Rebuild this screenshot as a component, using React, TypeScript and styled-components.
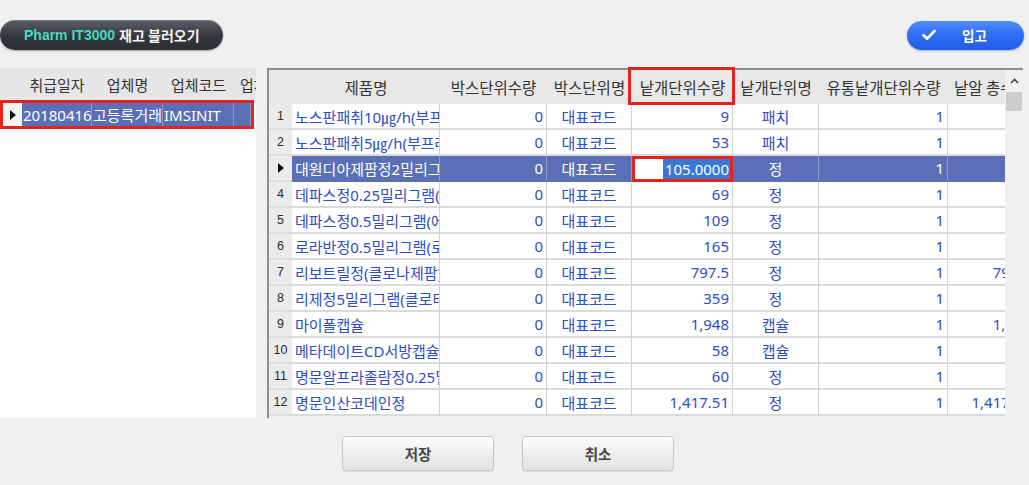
import React from 'react';
import styled, { createGlobalStyle } from 'styled-components';

const GlobalStyle = createGlobalStyle`
  html, body { margin: 0; padding: 0; background: #f0f0f0; }
  body { font-family: "Noto Sans", "Noto Sans CJK KR", sans-serif; }
  * { box-sizing: border-box; }
`;

const Page = styled.div`
  width: 1029px;
  height: 485px;
  display: flex;
  flex-direction: column;
  background: #f0f0f0;
  overflow: hidden;
`;

const TopBar = styled.div`
  height: 68px;
  flex-shrink: 0;
  display: flex;
  align-items: center;
  justify-content: space-between;
  padding: 2px 5px 0 0;
`;

const TitlePill = styled.div`
  width: 223px;
  height: 30px;
  border-radius: 15px;
  background: linear-gradient(#5a5e66, #34373d 55%, #2a2d32);
  box-shadow: inset 0 1px 0 rgba(255, 255, 255, 0.18), 0 1px 2px rgba(0, 0, 0, 0.35);
  display: flex;
  align-items: center;
  gap: 4px;
  padding-left: 24px;
  font-weight: 700;
`;

const Brand = styled.span`
  color: #46d8c4;
  font-family: "Liberation Sans", "Noto Sans", sans-serif;
  font-size: 14px;
`;

const TitleKo = styled.span`
  color: #f3f3f3;
  font-family: "Noto Sans CJK KR", sans-serif;
  font-size: 14px;
`;

const InButton = styled.button`
  width: 117px;
  height: 29px;
  border: none;
  border-radius: 15px;
  background: linear-gradient(#4f8dff, #2f6cf6 50%, #1f5ce9);
  box-shadow: 0 1px 2px rgba(0, 40, 140, 0.3);
  color: #ffffff;
  display: flex;
  align-items: center;
  gap: 26px;
  padding: 0 0 0 15px;
  font-family: "Noto Sans CJK KR", sans-serif;
  font-size: 13.5px;
  font-weight: 700;
`;

const Main = styled.div`
  height: 350px;
  flex-shrink: 0;
  display: flex;
  gap: 11px;
  padding-right: 6px;
`;

const LeftPanel = styled.div`
  width: 256px;
  flex-shrink: 0;
  background: #ffffff;
  display: flex;
  flex-direction: column;
  overflow: hidden;
`;

const LeftHeader = styled.div`
  height: 32px;
  flex-shrink: 0;
  background: #e6e6e6;
  display: grid;
  grid-template-columns: 22px 70px 71px 71px 80px;
  align-items: center;
  font-family: "Noto Sans CJK KR", sans-serif;
  font-size: 15px;
  color: #333333;
  white-space: nowrap;
`;

const LeftHeadCell = styled.div<{ $start?: boolean }>`
  text-align: ${(p) => (p.$start ? 'left' : 'center')};
  padding-left: ${(p) => (p.$start ? '6px' : '0')};
  overflow: hidden;
`;

const LeftRow = styled.div`
  width: 254px;
  height: 29px;
  border: 3px solid #e3231d;
  display: grid;
  grid-template-columns: 19px 70px 71px 71px 17px;
  font-size: 15px;
  color: #ffffff;
  white-space: nowrap;
`;

const Indicator = styled.div`
  background: #f4f4f4;
  display: flex;
  align-items: center;
  justify-content: center;
`;

const Arrow = styled.span`
  width: 0;
  height: 0;
  border-left: 6px solid #111111;
  border-top: 5px solid transparent;
  border-bottom: 5px solid transparent;
`;

const LeftCell = styled.div`
  background: #5a6fb5;
  border-right: 1px solid #8b9bcf;
  display: flex;
  align-items: center;
  padding-left: 1px;
  overflow: hidden;
`;

const GridPanel = styled.div`
  position: relative;
  flex: 1;
  min-width: 0;
  display: flex;
  border-top: 2px solid #8e8e8e;
  border-left: 2px solid #8e8e8e;
  background: #eeeeee;
`;

const Viewport = styled.div`
  flex: 1;
  min-width: 0;
  overflow: hidden;
  display: flex;
  flex-direction: column;
`;

const COLS = '23px 148px 107px 85px 101px 86px 129px 87px';

const HeaderRow = styled.div`
  height: 34px;
  flex-shrink: 0;
  width: max-content;
  display: grid;
  grid-template-columns: ${COLS};
  align-items: center;
  background: #e8e8e8;
  font-family: "Noto Sans CJK KR", sans-serif;
  font-size: 15.5px;
  color: #333333;
  white-space: nowrap;
`;

const HeadCell = styled.div`
  text-align: center;
  overflow: hidden;
`;

const DataRow = styled.div`
  height: 26px;
  flex-shrink: 0;
  width: max-content;
  display: grid;
  grid-template-columns: ${COLS};
  font-size: 15px;
  white-space: nowrap;
`;

const RowHead = styled.div`
  background: #ebebeb;
  border-bottom: 2px solid #dedede;
  display: flex;
  align-items: center;
  justify-content: center;
  font-family: "Liberation Sans", sans-serif;
  font-size: 12.5px;
  color: #2a2a2a;
`;

const Cell = styled.div<{ $align: 'left' | 'right' | 'center'; $selected?: boolean }>`
  background: ${(p) => (p.$selected ? '#5a6fb5' : '#ffffff')};
  color: ${(p) => (p.$selected ? '#ffffff' : '#2c4dc6')};
  border-right: 1px solid ${(p) => (p.$selected ? '#8c9bcc' : '#d2d2d2')};
  border-bottom: 2px solid ${(p) => (p.$selected ? '#5a6fb5' : '#dadada')};
  display: flex;
  align-items: center;
  justify-content: ${(p) => (p.$align === 'left' ? 'flex-start' : p.$align === 'right' ? 'flex-end' : 'center')};
  padding: 0 3px;
  overflow: hidden;
`;

const EditCell = styled.div`
  background: #ffffff;
  border: 3px solid #e3231d;
  display: flex;
  align-items: center;
  justify-content: flex-end;
  padding: 0;
  overflow: hidden;
`;

const Selection = styled.span`
  background: #3a78d6;
  color: #ffffff;
  padding: 0 1px 0 2px;
  line-height: 20px;
`;

const ScrollBar = styled.div`
  width: 18px;
  flex-shrink: 0;
  background: #f0f0f0;
  display: flex;
  flex-direction: column;
  align-items: stretch;
`;

const ScrollArrow = styled.div`
  height: 22px;
  display: flex;
  align-items: center;
  justify-content: center;
`;

const ScrollThumb = styled.div`
  height: 19px;
  margin: 0 1px;
  background: #cdcdcd;
`;

const MarkBox = styled.div`
  position: absolute;
  left: 359px;
  top: -3px;
  width: 107px;
  height: 38px;
  border: 3px solid #e3231d;
  pointer-events: none;
`;

const Footer = styled.div`
  flex: 1;
  display: flex;
  align-items: flex-start;
  gap: 28px;
  padding: 18px 0 0 342px;
`;

const FooterButton = styled.button`
  width: 152px;
  height: 35px;
  border: 1px solid #c6c6c6;
  border-radius: 4px;
  background: linear-gradient(#fdfdfd, #ececec 60%, #e2e2e2);
  box-shadow: 0 1px 1px rgba(0, 0, 0, 0.08);
  font-family: "Noto Sans CJK KR", sans-serif;
  font-size: 14.5px;
  font-weight: 700;
  color: #454545;
`;

type Row = {
  n: string;
  name: string;
  unit: string;
  unitName: string;
  total: string;
  selected?: boolean;
};

const rows: Row[] = [
  { n: '1', name: '노스판패취10㎍/h(부프레노르핀)', unit: '9', unitName: '패치', total: '9' },
  { n: '2', name: '노스판패취5㎍/h(부프레노르핀)', unit: '53', unitName: '패치', total: '53' },
  { n: '', name: '대원디아제팜정2밀리그램', unit: '105.0000', unitName: '정', total: '105', selected: true },
  { n: '4', name: '데파스정0.25밀리그램(에티졸람)', unit: '69', unitName: '정', total: '69' },
  { n: '5', name: '데파스정0.5밀리그램(에티졸람)', unit: '109', unitName: '정', total: '109' },
  { n: '6', name: '로라반정0.5밀리그램(로라제팜)', unit: '165', unitName: '정', total: '165' },
  { n: '7', name: '리보트릴정(클로나제팜)', unit: '797.5', unitName: '정', total: '797.5' },
  { n: '8', name: '리제정5밀리그램(클로티아제팜)', unit: '359', unitName: '정', total: '359' },
  { n: '9', name: '마이폴캡슐', unit: '1,948', unitName: '캡슐', total: '1,948' },
  { n: '10', name: '메타데이트CD서방캡슐', unit: '58', unitName: '캡슐', total: '58' },
  { n: '11', name: '명문알프라졸람정0.25밀리그램', unit: '60', unitName: '정', total: '60' },
  { n: '12', name: '명문인산코데인정', unit: '1,417.51', unitName: '정', total: '1,417.51' },
];

const CheckIcon = () => (
  <svg width="14" height="12" viewBox="0 0 14 12" aria-hidden="true">
    <path d="M1.5 6.2 L5.2 9.6 L12.5 2" fill="none" stroke="#ffffff" strokeWidth="2.8" strokeLinecap="round" strokeLinejoin="round" />
  </svg>
);

const UpChevron = () => (
  <svg width="9" height="6" viewBox="0 0 9 6" aria-hidden="true">
    <path d="M1 5 L4.5 1.5 L8 5" fill="none" stroke="#444" strokeWidth="1.6" />
  </svg>
);

export default function App() {
  return (
    <>
      <GlobalStyle />
      <Page>
        <TopBar>
          <TitlePill>
            <Brand>Pharm IT3000</Brand>
            <TitleKo>재고 불러오기</TitleKo>
          </TitlePill>
          <InButton>
            <CheckIcon />
            <span>입고</span>
          </InButton>
        </TopBar>

        <Main>
          <LeftPanel>
            <LeftHeader>
              <div />
              <LeftHeadCell>취급일자</LeftHeadCell>
              <LeftHeadCell>업체명</LeftHeadCell>
              <LeftHeadCell>업체코드</LeftHeadCell>
              <LeftHeadCell $start>업체구분</LeftHeadCell>
            </LeftHeader>
            <LeftRow>
              <Indicator>
                <Arrow />
              </Indicator>
              <LeftCell>20180416</LeftCell>
              <LeftCell>고등록거래처</LeftCell>
              <LeftCell>IMSINIT</LeftCell>
              <LeftCell />
            </LeftRow>
          </LeftPanel>

          <GridPanel>
            <Viewport>
              <HeaderRow>
                <div />
                <HeadCell>제품명</HeadCell>
                <HeadCell>박스단위수량</HeadCell>
                <HeadCell>박스단위명</HeadCell>
                <HeadCell>낱개단위수량</HeadCell>
                <HeadCell>낱개단위명</HeadCell>
                <HeadCell>유통낱개단위수량</HeadCell>
                <HeadCell>낱알 총수량</HeadCell>
              </HeaderRow>
              {rows.map((r, i) => (
                <DataRow key={i}>
                  <RowHead>{r.selected ? <Arrow /> : r.n}</RowHead>
                  <Cell $align="left" $selected={r.selected}>{r.name}</Cell>
                  <Cell $align="right" $selected={r.selected}>0</Cell>
                  <Cell $align="center" $selected={r.selected}>대표코드</Cell>
                  {r.selected ? (
                    <EditCell>
                      <Selection>{r.unit}</Selection>
                    </EditCell>
                  ) : (
                    <Cell $align="right">{r.unit}</Cell>
                  )}
                  <Cell $align="center" $selected={r.selected}>{r.unitName}</Cell>
                  <Cell $align="right" $selected={r.selected}>1</Cell>
                  <Cell $align="right" $selected={r.selected}>{r.total}</Cell>
                </DataRow>
              ))}
            </Viewport>
            <ScrollBar>
              <ScrollArrow>
                <UpChevron />
              </ScrollArrow>
              <ScrollThumb />
            </ScrollBar>
            <MarkBox />
          </GridPanel>
        </Main>

        <Footer>
          <FooterButton>저장</FooterButton>
          <FooterButton>취소</FooterButton>
        </Footer>
      </Page>
    </>
  );
}
